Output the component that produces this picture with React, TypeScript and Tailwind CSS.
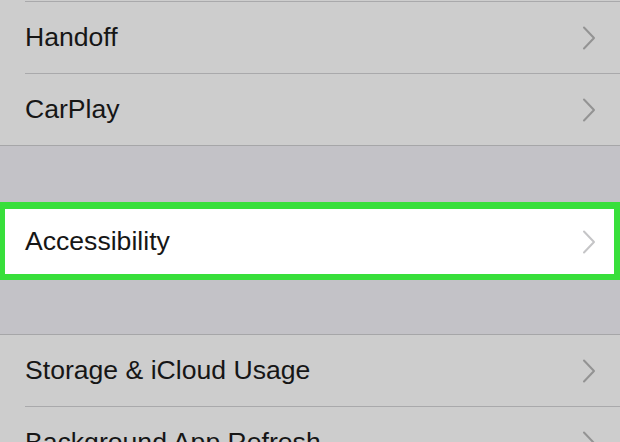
const Chevron = ({ color }: { color: string }) => (
  <svg width="14" height="24" viewBox="0 0 14 24" fill="none" className="shrink-0">
    <path d="M2 1.5 L12 12 L2 22.5" stroke={color} strokeWidth="2" strokeLinecap="round" strokeLinejoin="round" />
  </svg>
);

const Row = ({ label, h = "h-[71px]" }: { label: string; h?: string }) => (
  <div className={`flex items-center justify-between pl-[25px] pr-[24px] ${h}`}>
    <span className="text-[26.6px] text-[#161616] leading-none">{label}</span>
    <Chevron color="#939393" />
  </div>
);

const Inset = () => (
  <div className="pl-[25px]">
    <div className="h-px bg-[#a9a9ab]" />
  </div>
);

export default function App() {
  return (
    <div
      className="w-[620px] h-[442px] overflow-hidden bg-[#c3c2c7]"
      style={{ fontFamily: '"Liberation Sans", Arial, sans-serif' }}
    >
      <div className="bg-[#cdcdcd]">
        <div className="h-px" />
        <Inset />
        <Row label="Handoff" />
        <Inset />
        <Row label="CarPlay" />
      </div>
      <div className="h-px bg-[#a6a6a8]" />
      <div className="h-[56px]" />
      <div className="h-[78px] border-l-[5px] border-r-[6px] border-t-[7px] border-b-[6px] border-[#38df3b] bg-white flex items-center justify-between pl-[20px] pr-[18px]">
        <span className="text-[26.6px] text-[#161616] leading-none">Accessibility</span>
        <Chevron color="#c5c5c7" />
      </div>
      <div className="h-[54px]" />
      <div className="h-px bg-[#a6a6a8]" />
      <div className="bg-[#cdcdcd]">
        <Row label="Storage & iCloud Usage" />
        <Inset />
        <Row label="Background App Refresh" />
      </div>
    </div>
  );
}
